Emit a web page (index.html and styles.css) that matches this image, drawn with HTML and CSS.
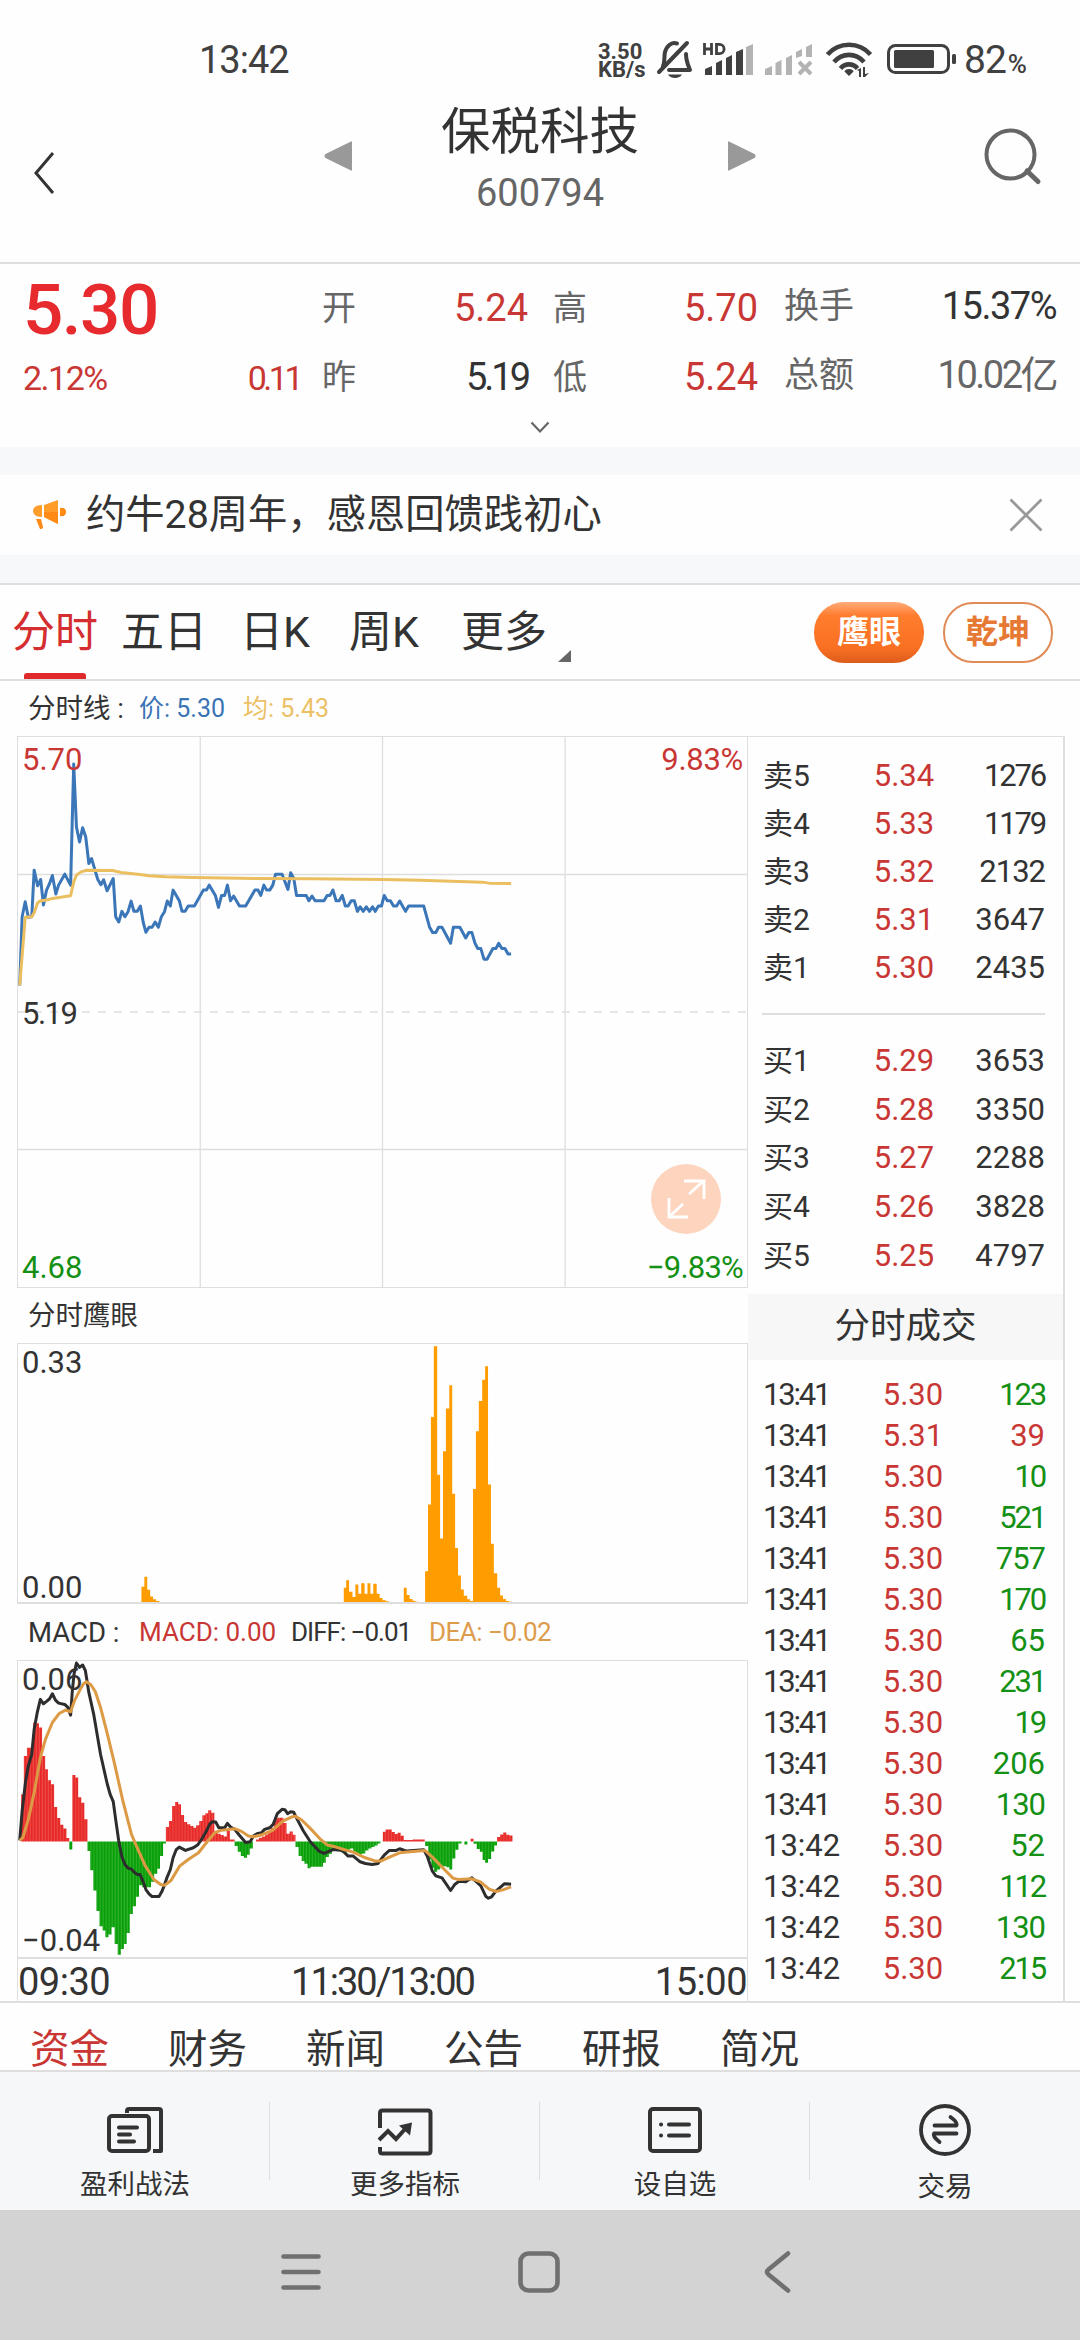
FILE: index.html
```html
<!DOCTYPE html>
<html lang="zh-CN">
<head>
<meta charset="utf-8">
<title>保税科技 600794</title>
<link rel="stylesheet" href="styles.css">
</head>
<body>
<div class="status">
  <span class="clock">13:42</span>
  <div class="status-icons">
    <span class="speed"><b>3.50</b><b>KB/s</b></span>
    <svg class="sys" width="466" height="44" viewBox="650 38 300 44" preserveAspectRatio="xMinYMin meet">
      <g fill="none" stroke="#404040" stroke-width="4" stroke-linecap="round">
        <path d="M659 72L687 43"/>
        <path d="M663 66C665 62 664 56 665 52C667 45 672 42 677 43.500"/>
        <path d="M686 54C686 61 688 65 690 70H669" stroke-linejoin="round"/>
      </g>
      <path d="M668 74.500h14c-2 4.500-12 4.500-14 0z" fill="#404040"/>
      <g fill="none" stroke="#404040" stroke-width="2.800"><path d="M704.500 43v12M711.500 43v12M704.500 49h7M716.500 44.400h3a4.600 4.600 0 0 1 0 9.200h-3z"/></g>
      <path fill="#404040" d="M705 69l7-3v9h-7zM716 63l6-3v15h-6zM726 58l6-3v20h-6zM736 52l7-3v26h-7z"/>
      <path fill="#b3b3b3" d="M746 47l7-3v31h-7zM765 69l7-3v9h-7zM775.500 63l6-3v15h-6zM786 58l6-3v20h-6zM796 52l6-3v7l-6 2zM806 47l6-3v13h-6z"/>
      <path d="M799 62l12 12m0-12l-12 12" stroke="#b3b3b3" stroke-width="4"/>
      <g fill="none" stroke="#404040" stroke-width="4.600"><path d="M827.500 54.500C839 41.500 859 41.500 870.500 54.500M834 62C842.500 52.500 855.500 52.500 864 62M840.500 68.500C845 63 853 63 857.500 68.500"/></g>
      <path fill="#404040" d="M849 69c3 0 4.500 1.500 4.500 2.500L849 76l-4.500-4.500c0-1 1.500-2.500 4.500-2.500zM857 70l4-2v9h-2v-6zM863 67h2v7l4-1-4 4h-2z"/>
      <rect x="888.500" y="45.500" width="60" height="27" rx="7" fill="none" stroke="#404040" stroke-width="3"/>
      <rect x="894" y="50" width="40" height="18" rx="1.500" fill="#404040"/>
      <rect x="952" y="54" width="4" height="10" rx="1.500" fill="#404040"/>
    </svg>
    <span class="batt">82<small>%</small></span>
  </div>
</div>

<header class="header">
  <svg class="back" width="22" height="44" viewBox="0 0 22 44"><path d="M20 2L3 22l17 20" fill="none" stroke="#333" stroke-width="3"/></svg>
  <svg class="prev" width="28" height="30" viewBox="0 0 28 30"><path d="M28 1v28q0 1-1 .5L1.500 17q-2-2 0-4L27 .5q1-.5 1 .5z" fill="#999"/></svg>
  <div class="names"><h1>保税科技</h1><span>600794</span></div>
  <svg class="next" width="28" height="30" viewBox="0 0 28 30"><path d="M0 1v28q0 1 1 .5L26.500 17q2-2 0-4L1 .5Q0 0 0 1z" fill="#999"/></svg>
  <svg class="search" width="58" height="58" viewBox="0 0 58 58"><g fill="none" stroke="#666" stroke-width="4"><circle cx="26.500" cy="26.500" r="24"/><path d="M43 43l11 10.500" stroke-width="5" stroke-linecap="round"/></g></svg>
</header>

<section class="quote">
  <div class="last"><strong>5.30</strong><div><span>2.12%</span><span class="change">0.11</span></div></div>
  <dl class="c1"><dt>开</dt><dd class="red">5.24</dd><dt>昨</dt><dd>5.19</dd></dl>
  <dl class="c2"><dt>高</dt><dd class="red">5.70</dd><dt>低</dt><dd class="red">5.24</dd></dl>
  <dl class="c3"><dt>换手</dt><dd class="pct">15.37%</dd><dt>总额</dt><dd class="grey">10.02亿</dd></dl>
  <svg class="expand" width="20" height="13" viewBox="0 0 20 13"><path d="M1.500 1.500l8.500 9 8.500-9" fill="none" stroke="#666" stroke-width="2.200"/></svg>
</section>

<section class="notice">
  <svg width="36" height="30" viewBox="0 0 36 30">
    <path fill="#ff9d2b" d="M2 8Q4 5 10 5v12Q4 17 2 14q-2-3 0-6zM12 5L26 0v24L12 17z"/>
    <path fill="#ff8a16" d="M12 12h14v12L12 17zM28 8q6-1 6 4t-6 4zM4 19h5l2 8q0 2-3 2z"/>
  </svg>
  <p>约牛28周年，感恩回馈践初心</p>
  <svg width="34" height="34" viewBox="0 0 34 34"><path d="M1.500 1.500l31 31m0-31l-31 31" stroke="#999" stroke-width="2.800"/></svg>
</section>

<nav class="periods">
  <a class="on">分时</a><a>五日</a><a>日K</a><a>周K</a><a>更多</a>
  <svg width="13" height="12" viewBox="0 0 13 12"><path d="M13 0v12H0z" fill="#666"/></svg>
  <button class="solid">鹰眼</button><button>乾坤</button>
</nav>

<main class="board">
  <div class="charts">
    <p class="legend price-legend"><span>分时线 :</span><em class="blue">价: 5.30</em><em class="yellow">均: 5.43</em></p>
    <figure class="plot price">
      <svg viewBox="50 49 2120 1656" preserveAspectRatio="none">
        <g class="grid"><path d="M580 49v1656M1110 49v1656M1641 49v1656M50 463h2120M50 1291h2120"/><path class="dash" d="M50 877h2120"/></g>
        <polyline class="line blue-line" points="55,797 62,590 71,545 80,592 90,590 97,450 107,497 116,478 124,555 133,510 141,492 150,466 160,522 168,495 186,462 203,495 212,130 220,320 229,365 238,322 247,350 256,430 264,415 282,478 291,494 299,479 309,512 327,475 334,590 343,606 352,574 361,590 370,575 379,543 387,574 397,574 406,558 414,606 422,637 431,622 440,622 449,606 458,622 467,590 476,575 484,543 493,558 501,510 519,542 527,574 536,574 545,558 563,558 589,510 598,510 606,495 624,526 633,562 642,526 651,526 659,495 668,542 677,528 694,558 712,558 739,510 748,510 756,526 765,495 773,510 782,510 791,495 799,462 818,462 835,508 843,458 852,475 860,526 888,526 896,542 905,528 914,542 940,542 949,526 957,526 966,510 975,542 984,542 993,526 1002,558 1010,558 1019,542 1028,542 1037,574 1045,560 1054,574 1063,560 1072,574 1081,560 1089,574 1098,558 1107,558 1115,526 1124,542 1133,542 1142,558 1151,558 1160,543 1177,574 1186,558 1230,558 1247,622 1256,638 1265,638 1273,622 1283,622 1308,670 1316,622 1335,622 1352,654 1361,638 1370,638 1379,670 1387,686 1396,686 1405,718 1414,718 1431,686 1440,686 1448,670 1457,686 1466,686 1475,702 1484,702"/>
        <polyline class="line avg-line" points="55,797 71,592 90,590 97,578 107,548 116,542 133,540 150,535 203,527 212,485 220,465 233,455 250,450 325,451 350,457 405,463 430,467 480,470 560,472 740,475 900,476 1110,478 1220,480 1400,486 1420,489 1484,490"/>
      </svg>
      <span class="tl red">5.70</span><span class="tr red">9.83%</span><span class="ml">5.19</span><span class="bl green">4.68</span><span class="br green">−9.83%</span>
      <svg class="zoom" width="70" height="70" viewBox="0 0 70 70"><circle cx="35" cy="35" r="35" fill="#fdd5be"/><path d="M33 17h20v18M52 17.500L38 30M18 34v19h19M18.500 52.500L32 40" fill="none" stroke="#fff" stroke-width="2.800"/></svg>
    </figure>
    <p class="legend eye-legend"><span>分时鹰眼</span></p>
    <figure class="plot eye">
      <svg viewBox="36 163 1506 780" preserveAspectRatio="none">
        <path fill="#ff9c00" d="M291 943V897H297V867H303V906H309V926H315V935H321V940H328V943zM709 943V900H714V877H720V912H727V928H733V890H739V918H745V886H752V918H758V886H764V918H770V888H777V918H783V931H789V938H796V941H802V943zM833 943V900H839V922H845V934H851V939H857V942H864V943zM877 943V850H883V648H889V384H895V170H902V558H908V751H914V487H920V358H927V288H933V616H939V780H945V863H951V905H957V924H964V935H970V940H976V601H982V427H988V335H995V271H1001V230H1007V588H1013V767H1019V856H1026V900H1032V923H1038V934H1044V940H1050V942H1057V943z"/>
      </svg>
      <span class="tl">0.33</span><span class="bl">0.00</span>
    </figure>
    <p class="legend macd-legend"><span>MACD :</span><em class="red">MACD: 0.00</em><em class="diff">DIFF: −0.01</em><em class="dea orange">DEA: −0.02</em></p>
    <figure class="plot macd">
      <svg viewBox="50 151 2120 886" preserveAspectRatio="none">
        <defs>
          <pattern id="up" patternUnits="userSpaceOnUse" x="49.500" y="0" width="8.830" height="900"><rect width="8.830" height="900" fill="#f4605c"/><rect x="1.300" width="7" height="900" fill="#e62a28"/></pattern>
          <pattern id="down" patternUnits="userSpaceOnUse" x="49.500" y="0" width="8.830" height="1100"><rect width="8.830" height="1100" fill="#4bbd44"/><rect x="1.300" width="7" height="1100" fill="#089f08"/></pattern>
        </defs>
        <path fill="url(#up)" d="M59 691V550H67V435H76V411H94V335H103V337H111V350H120V435H129V475H137V508H146V520H155V588H164V621H173V641H182V652H191V681H199V691zM208 691V492H217V500H225V559H234V575H243V625H252V691zM480 691V648H489V630H498V585H507V573H516V580H524V612H533V633H542V640H551V645H560V650H568V643H577V630H586V613H595V607H603V598H612V605H621V660H630V668H639V672H648V676H657V660H666V685H680V691zM742 691V685H751V680H760V676H769V670H778V665H786V650H795V625H804V620H822V636H831V668H840V661H849V671H857V691zM1111 691V662H1119V655H1137V654H1137V663H1146V669H1154V665H1163V674H1172V687H1198V685H1233V691zM1366 691V683H1375V691zM1443 691V678H1452V670H1461V664H1470V671H1479V673H1488V691z"/>
        <path fill="url(#down)" d="M199 691V715H208V691zM252 691V720H260V777H269V838H278V899H287V945H296V958H304V978H313V970H322V948H331V998H340V1030H349V1013H358V998H366V965H375V908H384V885H393V857H402V822H411V828H437V812H446V788H455V773H463V735H472V697H480V691zM680 691V705H689V722H698V735H707V740H716V731H724V712H733V691zM857 691V708H866V735H875V750H883V758H892V771H901V767H937V755H945V738H954V728H963V716H981V718H990V724H1007V716H1016V712H1025V722H1034V729H1051V727H1060V718H1069V712H1078V708H1087V703H1096V697H1104V691zM1234 691V705H1243V745H1252V770H1260V782H1269V775H1278V768H1287V765H1296V768H1304V775H1313V742H1322V716H1331V697H1340V691zM1348 691V700H1357V691zM1375 691V698H1384V714H1393V722H1401V747H1408V755H1417V744H1426V721H1435V703H1443V691z"/>
        <polyline class="line diff-line" points="55,688 62,600 72,512 80,465 90,430 97,355 106,305 115,266 124,279 133,272 142,264 150,249 159,268 168,277 186,281 195,290 203,313 208,240 213,190 220,157 229,170 238,163 246,180 256,245 270,310 290,430 309,517 318,550 327,572 334,625 343,690 352,737 361,760 370,771 380,774 387,782 396,790 405,790 414,812 422,835 431,848 440,856 460,856 468,842 475,824 484,797 493,775 501,740 510,716 519,708 537,718 560,710 572,702 584,685 598,660 607,640 615,632 625,633 634,650 651,650 659,637 668,648 680,655 695,674 712,694 725,692 735,675 745,668 758,665 767,655 782,650 792,640 804,608 818,595 826,596 834,608 843,602 852,604 862,625 880,660 900,692 925,720 940,727 968,715 993,718 1010,735 1025,735 1045,752 1060,757 1080,760 1097,757 1115,732 1130,718 1150,718 1160,713 1180,720 1230,716 1240,735 1255,780 1265,794 1283,800 1308,838 1320,820 1333,810 1352,812 1370,800 1385,814 1396,824 1410,855 1418,861 1426,858 1440,840 1464,818 1484,819"/>
        <polyline class="line dea-line" points="55,688 64,680 80,625 97,545 115,440 130,385 150,335 170,308 188,298 203,303 215,268 230,238 240,220 249,213 262,222 275,243 290,290 310,370 330,455 355,570 380,670 400,718 420,764 445,805 465,820 477,822 495,808 520,765 545,745 575,725 600,692 622,665 640,658 680,653 700,661 720,675 735,677 760,671 790,658 820,630 845,618 857,616 875,627 900,652 930,685 950,702 975,708 1000,716 1025,723 1060,740 1090,750 1105,750 1130,738 1160,725 1190,722 1233,718 1255,738 1290,775 1315,801 1330,805 1370,803 1395,812 1420,834 1440,841 1460,836 1484,827"/>
      </svg>
      <span class="tl">0.06</span><span class="bl">−0.04</span>
    </figure>
    <div class="axis"><span>09:30</span><span class="noon">11:30/13:00</span><span>15:00</span></div>
  </div>

  <aside class="side">
    <ul class="asks">
      <li><span>卖5</span><b>5.34</b><i class="n2">1276</i></li>
      <li><span>卖4</span><b>5.33</b><i class="n2">1179</i></li>
      <li><span>卖3</span><b>5.32</b><i class="n1">2132</i></li>
      <li><span>卖2</span><b>5.31</b><i>3647</i></li>
      <li><span>卖1</span><b>5.30</b><i>2435</i></li>
    </ul>
    <ul class="bids">
      <li><span>买1</span><b>5.29</b><i>3653</i></li>
      <li><span>买2</span><b>5.28</b><i>3350</i></li>
      <li><span>买3</span><b>5.27</b><i>2288</i></li>
      <li><span>买4</span><b>5.26</b><i>3828</i></li>
      <li><span>买5</span><b>5.25</b><i>4797</i></li>
    </ul>
    <h2>分时成交</h2>
    <ul class="trades">
      <li><span class="n2">13:41</span><b>5.30</b><i class="green n2">123</i></li>
      <li><span class="n2">13:41</span><b>5.31</b><i class="red">39</i></li>
      <li><span class="n2">13:41</span><b>5.30</b><i class="green n2">10</i></li>
      <li><span class="n2">13:41</span><b>5.30</b><i class="green n2">521</i></li>
      <li><span class="n2">13:41</span><b>5.30</b><i class="green n1">757</i></li>
      <li><span class="n2">13:41</span><b>5.30</b><i class="green n2">170</i></li>
      <li><span class="n2">13:41</span><b>5.30</b><i class="green">65</i></li>
      <li><span class="n2">13:41</span><b>5.30</b><i class="green n2">231</i></li>
      <li><span class="n2">13:41</span><b>5.30</b><i class="green n2">19</i></li>
      <li><span class="n2">13:41</span><b>5.30</b><i class="green">206</i></li>
      <li><span class="n2">13:41</span><b>5.30</b><i class="green n1">130</i></li>
      <li><span>13:42</span><b>5.30</b><i class="green">52</i></li>
      <li><span>13:42</span><b>5.30</b><i class="green n2">112</i></li>
      <li><span>13:42</span><b>5.30</b><i class="green n1">130</i></li>
      <li><span>13:42</span><b>5.30</b><i class="green n2">215</i></li>
    </ul>
  </aside>
</main>

<nav class="info"><a class="red">资金</a><a>财务</a><a>新闻</a><a>公告</a><a>研报</a><a>简况</a></nav>

<nav class="tools">
  <a><svg width="56" height="56" viewBox="0 0 56 56"><g fill="none" stroke="#333" stroke-width="4"><rect x="2" y="14" width="40" height="35" rx="3"/><path d="M20 11V9q0-2 2-2h30q2 0 2 2v40h-8" stroke-linejoin="round"/><path d="M12 25.500h18M12 32.500h11M12 39.500h15" stroke-linecap="round"/></g></svg>盈利战法</a>
  <a><svg width="56" height="56" viewBox="0 0 56 56"><g fill="none" stroke="#333" stroke-width="4"><path d="M3 26V11q0-2.500 2.500-2.500H51q2.500 0 2.500 2.500v38q0 2.500-2.500 2.500H5.500Q3 51.500 3 49v-4"/><path d="M2 38l9-9 8 8 10-11"/></g><path d="M22 23.500l13-3-2 13z" fill="#333"/></svg>更多指标</a>
  <a><svg width="56" height="56" viewBox="0 0 56 56"><rect x="3" y="7" width="50" height="42" rx="3" fill="none" stroke="#333" stroke-width="4"/><path d="M14 22.500h.1M14 33.500h.1M22 22.500h20M22 33.500h20" stroke="#333" stroke-width="4" stroke-linecap="round"/></svg>设自选</a>
  <a><svg width="56" height="56" viewBox="0 0 56 56"><g fill="none" stroke="#333" stroke-width="3.800" stroke-linecap="round" stroke-linejoin="round"><circle cx="28" cy="28" r="24"/><path d="M17.500 23.500H39.500q1.500-3-6-8.500M39.500 31.500H17q-1.500 3 5.500 8.500"/></g></svg>交易</a>
</nav>

<footer class="sysnav">
  <svg width="40" height="42" viewBox="0 0 40 42"><path d="M2.500 5.500h35M2.500 21h35M2.500 36.500h35" stroke="#707070" stroke-width="4.600" stroke-linecap="round"/></svg>
  <svg width="42" height="42" viewBox="0 0 42 42"><rect x="2.500" y="2.500" width="37" height="37" rx="8" fill="none" stroke="#707070" stroke-width="4.600"/></svg>
  <svg width="28" height="42" viewBox="0 0 28 42"><path d="M25 2.500L5.500 18.500q-3 2.500 0 5L25 39.500" fill="none" stroke="#707070" stroke-width="4.600" stroke-linecap="round"/></svg>
</footer>
</body>
</html>
```

FILE: styles.css
```css
* { box-sizing: border-box; margin: 0; padding: 0; }
body { width: 1080px; height: 2340px; overflow: hidden; background: #fefefe; color: #333; font-family: Roboto, "Noto Sans CJK SC", sans-serif; font-size: 31px; }
svg { display: block; flex: none; }
ul { list-style: none; }
em, i { font-style: normal; }
b { font-weight: 400; }
a, p, span, dt, dd, h1, h2 { white-space: nowrap; }
.red { color: #c93734; }
.green { color: #149014; }
.blue { color: #3a74b5; }
.yellow { color: #ecc065; }
.orange { color: #dd9b4c; }
.n1 { letter-spacing: -1px; }
.n2 { letter-spacing: -2.200px; }

.status { height: 100px; padding: 0 0 0 199px; display: flex; justify-content: space-between; color: #404040; }
.clock { font-size: 38px; line-height: 120px; letter-spacing: -1px; }
.status-icons { width: 482px; display: flex; }
.speed { width: 52px; padding-top: 43px; display: flex; flex-direction: column; font-size: 22px; line-height: 18px; }
.speed b { font-weight: 700; }
.sys { width: 310px; margin-top: 38px; overflow: visible; }
.batt { margin-left: 4px; font-size: 39px; line-height: 120px; letter-spacing: -1px; }
.batt small { font-size: 26px; font-weight: 500; margin-left: 2px; }

.header { height: 164px; border-bottom: 2px solid #dedede; display: flex; align-items: flex-start; }
.back { margin: 51px 0 0 33px; }
.prev { margin: 41px 0 0 269px; }
.names { width: 376px; display: flex; flex-direction: column; align-items: center; }
.names h1 { font-size: 49.500px; font-weight: 400; line-height: 64px; }
.names span { margin-top: 7px; font-size: 38px; line-height: 44px; color: #666; }
.next { margin-top: 41px; }
.search { margin: 28px 0 0 228px; }

.quote { height: 183px; padding-left: 23px; display: grid; grid-template-columns: 275px 24px 206px 25px 205px 26px 272px; grid-template-rows: 143px 40px; }
.last { color: #c93734; padding-top: 4px; }
.last strong { display: block; font-size: 71px; font-weight: 500; line-height: 84px; color: #e62a2e; letter-spacing: -1.500px; }
.last div { display: flex; justify-content: space-between; font-size: 34px; line-height: 52px; letter-spacing: -1.500px; }
.change { letter-spacing: -3.500px; margin-right: -2px; }
.quote dl { display: grid; grid-template-columns: auto 1fr; grid-template-rows: 69px 69px; padding-top: 10px; line-height: 69px; }
.c1 { grid-column: 3; }
.c2 { grid-column: 5; }
.c3 { grid-column: 7; }
.quote dt { font-size: 34px; color: #666; }
.quote dd { font-size: 38px; text-align: right; }
.c1 dd:last-child { letter-spacing: -3px; }
.c3 dd { letter-spacing: -1.500px; margin-top: -2px; }
.c3 .grey { letter-spacing: -2.500px; }
.c3 dt { margin-top: -2px; font-size: 35px; }
.grey { color: #666; }
.expand { grid-column: 1 / -1; justify-self: center; margin-top: 14px; }

.notice { height: 136px; border: solid #f7f8fa; border-width: 28px 0; padding: 0 37px 0 32px; display: flex; align-items: center; }
.notice p { flex: 1; margin-left: 18px; font-size: 39.300px; line-height: 62px; }

.periods { height: 98px; border-top: 2px solid #dedede; border-bottom: 2px solid #dedede; padding-left: 12px; display: flex; font-size: 43px; line-height: 95px; }
.periods a { position: relative; width: 109px; }
.periods a:nth-child(2) { width: 119px; }
.periods a:nth-child(3) { width: 109px; }
.periods a:nth-child(4) { width: 112px; }
.periods a:nth-child(5) { width: 97px; }
.periods .on { color: #d42e30; }
.periods .on::after { content: ""; position: absolute; left: 12px; bottom: 0; width: 62px; height: 6px; border-radius: 3px 3px 0 0; background: #e0292b; }
.periods svg { margin-top: 65px; }
.periods button { width: 110px; height: 61px; margin: 17px 19px 0 0; border: 2px solid #e08a55; border-radius: 30px; background: #fff; color: #e67a35; font: 600 32px/55px Roboto, "Noto Sans CJK SC", sans-serif; text-align: center; }
.periods .solid { margin-left: 243px; border: 0; line-height: 59px; color: #fff; background: linear-gradient(#ffab7a, #ff7d2e 22%, #fa7023 75%, #dc5c1b); }

.board { height: 1322px; border-bottom: 2px solid #dedede; padding-left: 17px; display: flex; }
.charts { width: 731px; }
.legend { display: flex; padding-left: 11px; font-size: 26px; }
.legend span { width: 111px; font-size: 27.500px; }
.legend em { font-size: 25px; }
.price-legend { height: 55px; line-height: 56px; }
.price-legend em { width: 104px; }
.eye-legend { height: 55px; line-height: 56px; }
.macd-legend { height: 56px; line-height: 57px; }
.macd-legend em { width: 152px; font-size: 26px; }
.macd-legend .diff { width: 138px; letter-spacing: -1px; }
.macd-legend .dea { letter-spacing: -.500px; }
.plot { position: relative; border: 1px solid #dedede; }
.plot > svg:first-child { width: 100%; height: 100%; }
.price { height: 552px; }
.eye { height: 261px; border-bottom-width: 2px; }
.macd { height: 297px; border-bottom: 0; }
.plot span { position: absolute; line-height: 36px; font-size: 31px; }
.plot .tl { left: 4px; top: 5px; }
.plot .tr { right: 4px; top: 5px; letter-spacing: -.300px; }
.plot .ml { left: 4px; top: 259px; letter-spacing: -1.500px; }
.plot .bl { left: 4px; bottom: 1px; }
.plot .br { right: 4px; bottom: 1px; letter-spacing: -.800px; }
.plot.eye .tl, .plot.macd .tl { top: 1px; }
.plot.eye .bl { bottom: -4px; }
.plot.macd .bl { bottom: -2px; }
.zoom { position: absolute; left: 633px; top: 427px; }
.grid path { fill: none; stroke: #dedede; stroke-width: 1.300; vector-effect: non-scaling-stroke; }
.grid .dash { stroke-dasharray: 8 8; }
.line { fill: none; stroke-width: 3; stroke-linejoin: round; vector-effect: non-scaling-stroke; }
.blue-line { stroke: #3a76b8; }
.avg-line { stroke: #ebbf5f; }
.dea-line { stroke: #dd9a45; }
.diff-line { stroke: #2d2d2d; }
.axis { height: 44px; border: 1px solid #dedede; border-width: 2px 1px 0; display: flex; justify-content: space-between; font-size: 38px; line-height: 46px; letter-spacing: -.500px; }
.noon { letter-spacing: -2px; }

.side { width: 317px; border-top: 1px solid #dedede; border-right: 2px solid #dedede; margin-top: 55px; }
.side li { display: grid; grid-template-columns: 77px 1fr 77px; margin: 0 18px 0 15px; }
.side b { text-align: center; color: #c93734; }
.side li i { text-align: right; }
.asks { padding-top: 15px; height: 276px; }
.asks li { height: 48px; line-height: 48px; }
.asks span, .bids span { font-size: 30px; }
.bids { height: 281px; padding-top: 24px; position: relative; }
.bids::before { content: ""; position: absolute; left: 14px; right: 18px; top: 0; height: 2px; background: #dedede; }
.bids li { height: 48.700px; line-height: 48.700px; }
.side h2 { height: 66px; background: #f7f7f7; font-size: 35.500px; line-height: 65px; font-weight: 400; text-align: center; }
.trades { padding-top: 13px; }
.trades li { height: 41px; line-height: 43px; }
.trades b { padding-left: 18px; }

.info { height: 69px; border-bottom: 2px solid #dedede; padding-left: 30px; display: flex; overflow: hidden; font-size: 39.500px; line-height: 94px; }
.info a { width: 138px; }
.tools { height: 138px; background: #f6f7f9; display: flex; }
.tools a { flex: 1; display: flex; flex-direction: column; align-items: center; padding-top: 30px; font-size: 27.500px; line-height: 53px; background: linear-gradient(#dedede, #dedede) right 30px / 1px 78px no-repeat; }
.tools a:last-child { background: none; }
.tools a:last-child svg { margin-bottom: 2px; }
.sysnav { height: 130px; background: #d3d3d3; padding: 41px 0 0 281px; display: flex; }
.sysnav svg:nth-child(2) { margin: 0 203px 0 197px; }
```
